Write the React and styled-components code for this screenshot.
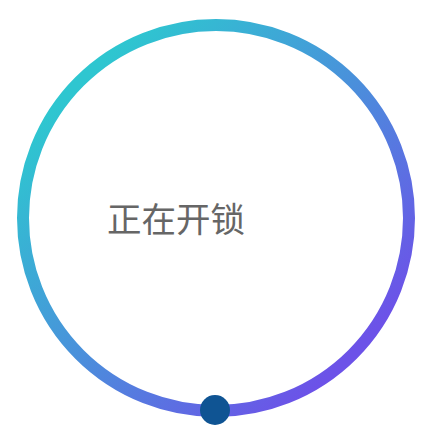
import React from "react";
import styled, { createGlobalStyle } from "styled-components";

const Global = createGlobalStyle`
  html, body { margin: 0; padding: 0; background: #ffffff; }
  body { font-family: "Noto Sans CJK SC", "Noto Sans", sans-serif; }
`;

const Page = styled.div`
  width: 432px;
  height: 432px;
  display: flex;
  padding: 19px 0 0 17px;
  box-sizing: border-box;
`;

const Dial = styled.div`
  position: relative;
  width: 398px;
  height: 398px;
  display: flex;
  align-items: center;
  padding-left: 90px;
  box-sizing: border-box;
`;

const Ring = styled.svg`
  position: absolute;
  inset: 0;
  width: 398px;
  height: 398px;
`;

const Label = styled.span`
  position: relative;
  font-size: 34.5px;
  line-height: 1;
  color: #666666;
  letter-spacing: 0;
  margin-top: -1px;
`;

const Knob = styled.div`
  position: absolute;
  left: 183px;
  top: 376px;
  width: 30px;
  height: 30px;
  border-radius: 50%;
  background: #0f5493;
`;

export default function App() {
  return (
    <>
      <Global />
      <Page>
        <Dial>
          <Ring viewBox="0 0 398 398">
            <defs>
              <linearGradient id="ringGrad" x1="0" y1="0" x2="1" y2="1">
                <stop offset="0.15" stopColor="#2ec6d0" />
                <stop offset="0.5" stopColor="#4a90db" />
                <stop offset="0.85" stopColor="#6c52e8" />
              </linearGradient>
            </defs>
            <circle cx="199" cy="199" r="193" fill="none" stroke="url(#ringGrad)" strokeWidth="12" />
          </Ring>
          <Label>正在开锁</Label>
          <Knob />
        </Dial>
      </Page>
    </>
  );
}
